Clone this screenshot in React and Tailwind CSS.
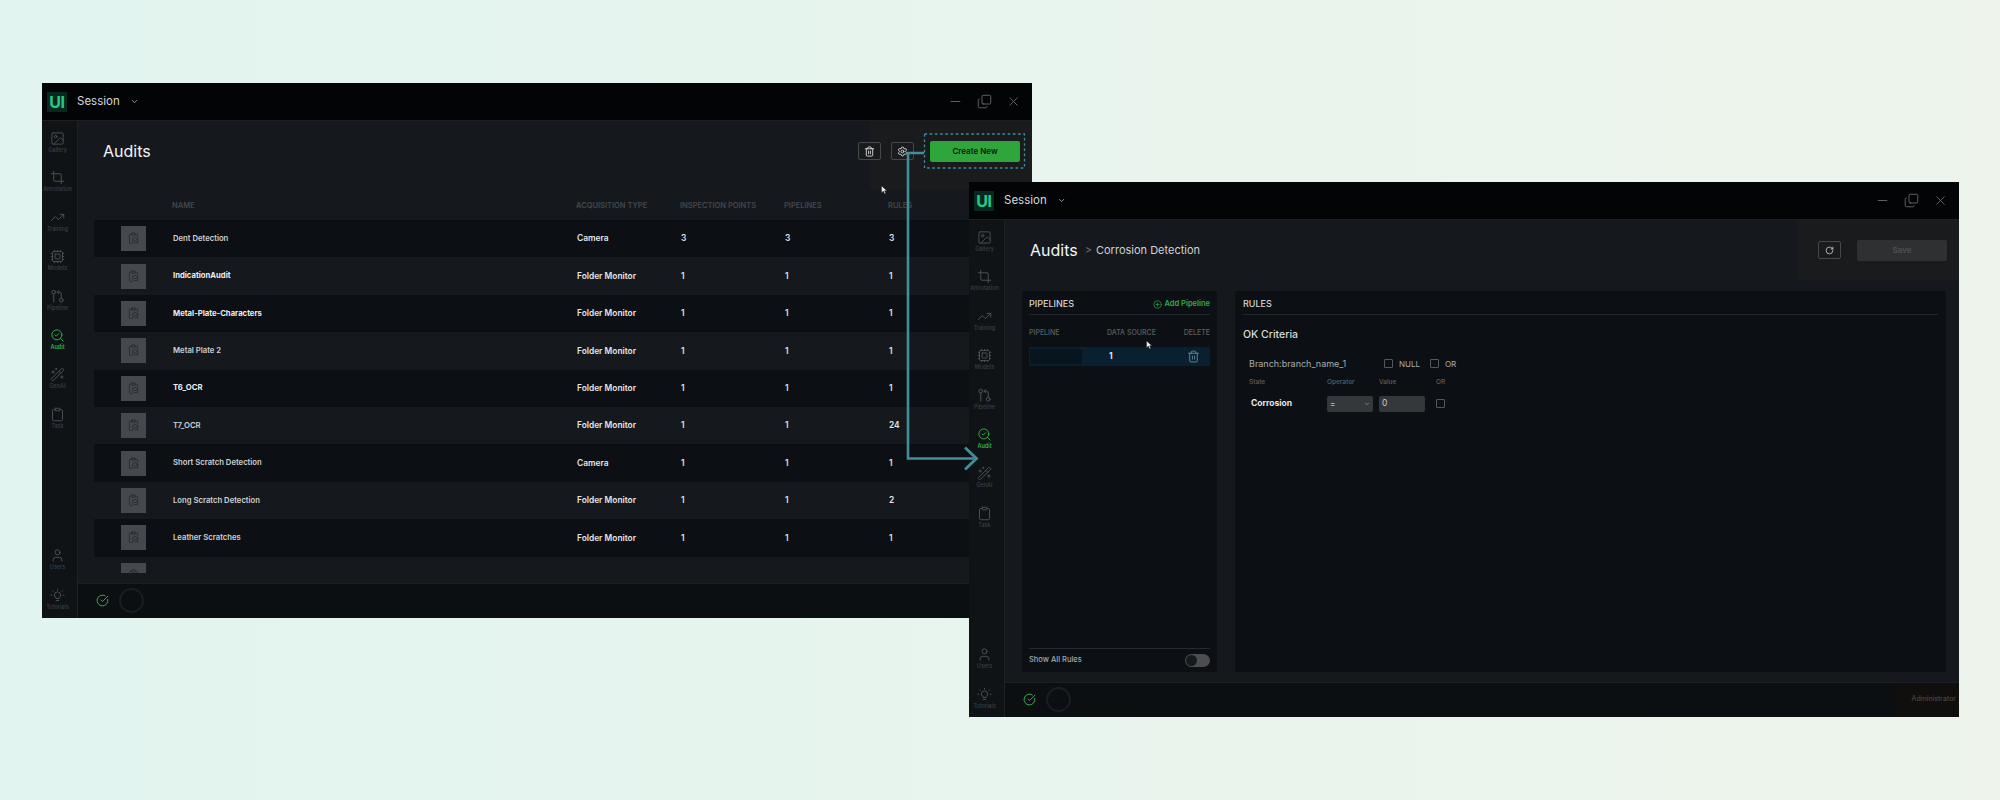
import React from "react";
import { Image, Crop, TrendingUp, Cpu, SearchCheck, WandSparkles, Clipboard, User, CircleCheckBig, Trash2, Settings, RotateCw, Minus, Copy, X, ChevronDown, CirclePlus } from "lucide-react";

const PipelineIcon = ({ className }) => (
  <svg viewBox="0 0 24 24" fill="none" stroke="currentColor" strokeWidth="1.6" strokeLinecap="round" strokeLinejoin="round" className={className}>
    <circle cx="6" cy="5" r="3" />
    <path d="M6 8v13" />
    <circle cx="18" cy="18" r="3" />
    <path d="M18 15V8a3 3 0 0 0-3-3h-3" />
    <path d="M14 2.5 11.5 5 14 7.500" />
  </svg>
);

const TutorialIcon = ({ className }) => (
  <svg viewBox="0 0 24 24" fill="none" stroke="currentColor" strokeWidth="1.5" strokeLinecap="round" strokeLinejoin="round" className={className}>
    <path d="M8.500 14.500c-1-1-1.500-2-1.500-3.200a5 5 0 0 1 10 0c0 1.200-.5 2.200-1.500 3.200-.7.700-1 1.300-1 2.300h-5c0-1-.3-1.600-1-2.300Z" />
    <path d="M10 20h4" />
    <path d="M12 2v1.500M4 4.500l1 1M20 4.500l-1 1M1.500 11.500H3M21 11.500h1.500" />
  </svg>
);

const ThumbIcon = () => (
  <svg viewBox="0 0 24 24" fill="none" stroke="#25292d" strokeWidth="1.500" strokeLinecap="round" strokeLinejoin="round" className="w-[13px] h-[13px]">
    <path d="M9 4H6a1.500 1.500 0 0 0-1.500 1.500v14A1.500 1.500 0 0 0 6 21h4" />
    <path d="M15 4h3a1.500 1.500 0 0 1 1.500 1.500V9" />
    <rect x="8.500" y="2" width="7" height="4" rx="1" />
    <circle cx="15" cy="15" r="5" />
    <path d="m13 15 1.500 1.500 2.500-2.500M19 19l2 2" />
  </svg>
);

const Cursor = ({ className }) => (
  <svg viewBox="0 0 12 16" className={className}>
    <path d="M1 1v11.500l3-2.700 2 4.700 2-.9-2-4.500h4Z" fill="#f4f4f4" stroke="#15191d" strokeWidth="0.6" />
  </svg>
);

const navTop = [
  ["Gallery", Image],
  ["Annotation", Crop],
  ["Training", TrendingUp],
  ["Models", Cpu],
  ["Pipeline", PipelineIcon],
  ["Audit", SearchCheck],
  ["GenAI", WandSparkles],
  ["Task", Clipboard],
];
const navBottom = [
  ["Users", User],
  ["Tutorials", TutorialIcon],
];

function NavItem({ label, Icon }) {
  const active = label === "Audit";
  return (
    <div className={`flex flex-col items-center ${active ? "text-[#35b24a]" : "text-[#4d5257]"}`}>
      <Icon className="w-[15px] h-[15px]" strokeWidth={1.5} />
      <span className={`text-[5.500px] leading-[9px] ${active ? "font-semibold text-[#35b24a]" : "font-medium text-[#3a3f44]"}`}>{label}</span>
    </div>
  );
}

function Window({ className, children, footerRight }) {
  return (
    <div className={`absolute w-[990px] h-[534.500px] flex flex-col overflow-hidden bg-[#15191d] ${className}`}>
      <div className="h-[38px] shrink-0 flex items-center bg-[#020406] border-b border-[#1c2024] pl-[5px] pr-[11px]">
        <div className="w-[20px] h-[20px] flex items-center justify-center bg-[#06281e] text-[#25c98d] text-[16px] font-bold tracking-tight">UI</div>
        <span className="ml-[10px] text-[11.500px] text-[#d6d8d9]">Session</span>
        <ChevronDown className="ml-[10px] w-[9px] h-[9px] text-[#c4c6c8]" strokeWidth={2} />
        <div className="ml-auto flex items-center gap-[14px] text-[#6a6e72]">
          <Minus className="w-[15px] h-[15px]" strokeWidth={1.400} />
          <Copy className="w-[15px] h-[15px] -scale-x-100 rotate-180" strokeWidth={1.400} />
          <X className="w-[15px] h-[15px]" strokeWidth={1.400} />
        </div>
      </div>
      <div className="flex-1 flex min-h-0">
        <div className="w-[36px] shrink-0 flex flex-col items-center bg-[#0f1316] border-r border-[#1e2226] pt-[10px] pb-[6px] pr-[4px]">
          <div className="flex flex-col gap-[15.400px]">
            {navTop.map(([l, I]) => <NavItem key={l} label={l} Icon={I} />)}
          </div>
          <div className="mt-auto flex flex-col gap-[16px]">
            {navBottom.map(([l, I]) => <NavItem key={l} label={l} Icon={I} />)}
          </div>
        </div>
        <div className="flex-1 flex flex-col min-w-0">
          <div className="flex-1 flex flex-col min-h-0">{children}</div>
          <div className="h-[35px] shrink-0 flex items-center bg-[#0b0f12] border-t border-[#1c2024] pl-[18px]">
            <CircleCheckBig className="w-[13px] h-[13px] text-[#35b24a]" strokeWidth={1.800} />
            <div className="ml-[10px] w-[25px] h-[25px] rounded-full border-2 border-[#1a1e22]" />
            {footerRight}
          </div>
        </div>
      </div>
    </div>
  );
}

const rows = [
  ["Dent Detection", "Camera", 3, 3, 3, false],
  ["IndicationAudit", "Folder Monitor", 1, 1, 1, true],
  ["Metal-Plate-Characters", "Folder Monitor", 1, 1, 1, true],
  ["Metal Plate 2", "Folder Monitor", 1, 1, 1, false],
  ["T6_OCR", "Folder Monitor", 1, 1, 1, true],
  ["T7_OCR", "Folder Monitor", 1, 1, 24, false],
  ["Short Scratch Detection", "Camera", 1, 1, 1, false],
  ["Long Scratch Detection", "Folder Monitor", 1, 1, 2, false],
  ["Leather Scratches", "Folder Monitor", 1, 1, 1, false],
  ["", "", "", "", "", false],
];

const gridCols = "grid grid-cols-[79px_404px_104px_104px_104px_1fr] items-center";

function IconButton({ children }) {
  return (
    <div className="w-[23px] h-[18px] flex items-center justify-center rounded-[2px] border border-[#45484b] bg-[#1a1b1c] text-[#d8d9da]">
      {children}
    </div>
  );
}

function AuditList() {
  return (
    <>
      <div className="relative h-[60px] shrink-0 flex items-center pl-[25px] pr-[12px]">
        <div className="absolute right-0 top-0 w-[162px] h-[68px] bg-[#1a1b1c]" />
        <h1 className="text-[16px] font-normal text-[#f3f5f6]">Audits</h1>
        <div className="relative ml-auto flex items-center">
          <IconButton><Trash2 className="w-[11px] h-[11px]" strokeWidth={2} /></IconButton>
          <div className="ml-[10px]"><IconButton><Settings className="w-[11px] h-[11px]" strokeWidth={2} /></IconButton></div>
          <button className="ml-[16px] w-[90px] h-[21px] rounded-[2px] bg-[#2ea63c] text-[8px] font-semibold text-[#0b1a0e]">Create New</button>
        </div>
      </div>
      <div className={`${gridCols} relative ml-[15px] mt-[11px] h-[28px] shrink-0 text-[7.500px] font-semibold text-[#43474b]`}>
        <span />
        <span>NAME</span>
        <span>ACQUISITION TYPE</span>
        <span>INSPECTION POINTS</span>
        <span>PIPELINES</span>
        <span>RULES</span>
      </div>
      <div className="ml-[16px] mr-[12px] h-[353px] shrink-0 overflow-hidden">
        {rows.map((r, i) => (
          <div key={i} className={`${gridCols} h-[37.400px] ${i % 2 === 0 ? "bg-[#0c0f13]" : "bg-[#15191d]"}`}>
            <div className="pl-[27px]">
              <div className="w-[25px] h-[25px] bg-[#45484c] flex items-center justify-center"><ThumbIcon /></div>
            </div>
            <span className={`text-[7.700px] ${r[5] ? "font-bold text-[#eceeef]" : "font-semibold text-[#cfd1d3]"}`}>{r[0]}</span>
            <span className="text-[8.400px] font-semibold text-[#e4e6e7]">{r[1]}</span>
            <span className="text-[8.400px] font-semibold text-[#e4e6e7]">{r[2]}</span>
            <span className="text-[8.400px] font-semibold text-[#e4e6e7]">{r[3]}</span>
            <span className="text-[8.400px] font-semibold text-[#e4e6e7]">{r[4]}</span>
          </div>
        ))}
      </div>
    </>
  );
}

function Box({ className = "" }) {
  return <div className={`w-[9px] h-[9px] rounded-[1px] border border-[#54585c] ${className}`} />;
}

function AuditDetail() {
  return (
    <>
      <div className="relative h-[60px] shrink-0 flex items-center pl-[25px] pr-[12px]">
        <div className="absolute right-0 top-0 w-[162px] h-[60px] bg-[#1a1b1c]" />
        <h1 className="relative text-[16px] font-normal text-[#f3f5f6]">Audits</h1>
        <span className="ml-[7px] text-[11px] text-[#6c7074]">&gt;</span>
        <span className="ml-[4px] text-[11px] text-[#cfd1d3]">Corrosion Detection</span>
        <div className="relative ml-auto flex items-center">
          <IconButton><RotateCw className="w-[9px] h-[9px]" strokeWidth={2} /></IconButton>
          <button className="ml-[16px] w-[90px] h-[21px] rounded-[2px] bg-[#2e3031] text-[8px] font-semibold text-[#4d5051]">Save</button>
        </div>
      </div>
      <div className="mt-[11px] mb-[10px] ml-[17px] mr-[13px] flex-1 flex gap-[18px] min-h-0">
        <div className="w-[195px] shrink-0 flex flex-col bg-[#0c1014] px-[7px]">
          <div className="h-[24px] shrink-0 pt-[3px] flex items-center justify-between border-b border-[#23272b]">
            <span className="text-[9px] font-medium text-[#d3d5d7]">PIPELINES</span>
            <span className="flex items-center gap-[3px] text-[7.500px] font-semibold text-[#35a945]">
              <CirclePlus className="w-[9px] h-[9px]" strokeWidth={1.800} />
              Add Pipeline
            </span>
          </div>
          <div className="h-[32px] shrink-0 pt-[4px] flex items-center text-[7px] font-medium text-[#5a5f63]">
            <span className="w-[78px]">PIPELINE</span>
            <span>DATA SOURCE</span>
            <span className="ml-auto">DELETE</span>
          </div>
          <div className="h-[19px] shrink-0 flex items-center bg-[#0a2030] rounded-[2px]">
            <div className="w-[52px] h-[15px] ml-[1px] bg-[#07151e]" />
            <span className="ml-[27px] text-[8.500px] font-bold text-[#e4e6e7]">1</span>
            <Trash2 className="ml-auto mr-[10px] w-[13px] h-[13px] text-[#6f97ad]" strokeWidth={1.500} />
          </div>
          <div className="mt-auto h-[24px] shrink-0 flex items-center justify-between border-t border-[#272b2f]">
            <span className="text-[7.500px] font-medium text-[#a4a7aa]">Show All Rules</span>
            <div className="w-[25px] h-[13px] rounded-full bg-[#4b4d50] flex items-center">
              <div className="w-[11px] h-[11px] ml-[1px] rounded-full bg-[#15191d]" />
            </div>
          </div>
        </div>
        <div className="flex-1 bg-[#0c1014] pl-[8px] pr-[8px]">
          <div className="h-[24px] pt-[3px] flex items-center border-b border-[#23272b]">
            <span className="text-[9px] font-medium text-[#d3d5d7]">RULES</span>
          </div>
          <div className="mt-[12px] text-[10.500px] font-medium text-[#d8dadb]">OK Criteria</div>
          <div className="mt-[15px] ml-[6px] h-[12px] flex items-center text-[9px] text-[#a9acae]">
            <span className="w-[135px]">Branch:branch_name_1</span>
            <Box />
            <span className="ml-[6px] w-[31px] text-[8px]">NULL</span>
            <Box />
            <span className="ml-[6px] text-[8px]">OR</span>
          </div>
          <div className="mt-[8px] ml-[6px] h-[10px] flex items-center text-[6.500px] font-medium text-[#5a5f63]">
            <span className="w-[78px]">State</span>
            <span className="w-[52px]">Operator</span>
            <span className="w-[57px]">Value</span>
            <span>OR</span>
          </div>
          <div className="mt-[8px] ml-[6px] h-[16px] flex items-center">
            <span className="w-[78px] pl-[2px] text-[8.500px] font-bold text-[#e4e6e7]">Corrosion</span>
            <div className="w-[46px] h-[16px] px-[3px] flex items-center justify-between rounded-[2px] bg-[#35383b] text-[8px] text-[#bfc1c3]">
              <span>=</span>
              <ChevronDown className="w-[6px] h-[6px]" strokeWidth={2} />
            </div>
            <div className="ml-[6px] w-[46px] h-[16px] px-[3px] flex items-center rounded-[2px] bg-[#35383b] text-[8.500px] text-[#c9cbcd]">0</div>
            <Box className="ml-[11px]" />
          </div>
        </div>
      </div>
    </>
  );
}

export default function App() {
  return (
    <div className="relative w-[2000px] h-[800px] overflow-hidden bg-gradient-to-r from-[#e2f4f0] to-[#eef4ec] font-['Inter','Liberation_Sans',sans-serif]">
      <Window className="left-[42px] top-[83px]"><AuditList /></Window>
      <Window
        className="left-[969px] top-[182px]"
        footerRight={
          <div className="ml-auto w-[63px] h-full flex items-center justify-end bg-[#110f0e] pr-[3px]">
            <span className="text-[7px] text-[#4f4f4f]">Administrator</span>
          </div>
        }
      >
        <AuditDetail />
      </Window>
      <svg className="absolute left-0 top-0 w-[2000px] h-[800px] pointer-events-none" viewBox="0 0 2000 800" fill="none">
        <rect x="924.500" y="134" width="100" height="34" stroke="#3f8f9c" strokeWidth="1.300" strokeDasharray="2.600 2.600" />
        <path d="M924 153H908V458.500H974" stroke="#3f8f9c" strokeWidth="2.600" />
        <path d="M965 447.500 976.500 458.500 965 469.500" stroke="#3f8f9c" strokeWidth="2.800" />
      </svg>
      <Cursor className="absolute left-[881px] top-[185px] w-[7px] h-[10px]" />
      <Cursor className="absolute left-[1146px] top-[340px] w-[7px] h-[10px]" />
    </div>
  );
}
